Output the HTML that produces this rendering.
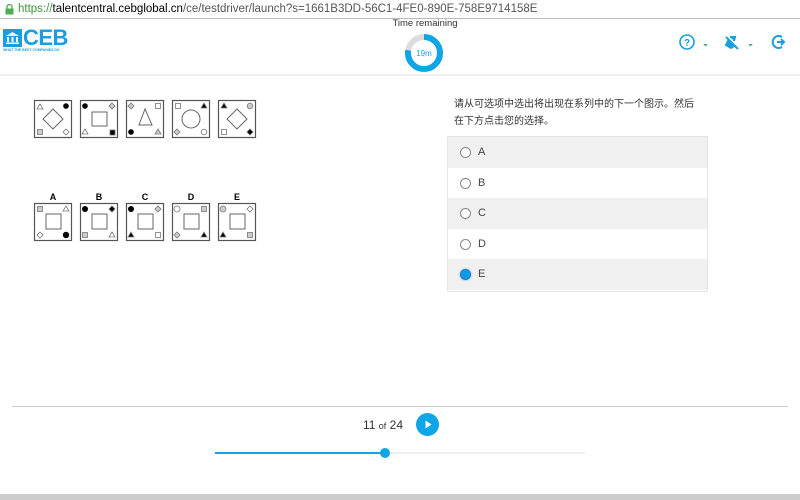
<!DOCTYPE html>
<html><head><meta charset="utf-8"><style>
*{margin:0;padding:0;box-sizing:border-box}
body{width:800px;height:500px;overflow:hidden;background:#fff;font-family:"Liberation Sans","Noto Sans CJK SC",sans-serif;position:relative;color:#333}
.abs{position:absolute}
.url{left:0;top:0;width:800px;height:19px;border-bottom:1px solid #bbb;background:#fff;font-size:11.5px;line-height:18px;padding-left:18px;color:#555}
.opt{position:absolute;left:448px;width:259px;height:30.5px;font-size:11px;line-height:30px;padding-left:30px;color:#444}
.rad{position:absolute;left:12px;top:10px;width:11px;height:11px;border:1px solid #888;border-radius:50%;background:#fff}
</style></head><body>
<div class="abs url"><svg class="abs" style="left:5px;top:4px" width="9" height="11"><rect x="0.5" y="4.5" width="8" height="6" fill="#4caf50"/><path d="M2 5V3a2.5 2.5 0 0 1 5 0v2" stroke="#4caf50" fill="none" stroke-width="1.3"/></svg><span style="color:#3a9a3a">https://</span><span style="color:#000">talentcentral.cebglobal.cn</span>/ce/testdriver/launch?s=1661B3DD-56C1-4FE0-890E-758E9714158E</div>
<div class="abs" style="left:0;top:74px;width:800px;height:2px;background:#eee"></div>
<div class="abs" style="left:3px;top:29px;width:19px;height:18px;background:#1a9ee0"></div>
<svg class="abs" style="left:5px;top:31px" width="15" height="14"><path d="M1 5L7.5 1L14 5Z" fill="#fff"/><rect x="2" y="6" width="2" height="5" fill="#fff"/><rect x="6.5" y="6" width="2" height="5" fill="#fff"/><rect x="11" y="6" width="2" height="5" fill="#fff"/><rect x="1" y="11.5" width="13" height="1.5" fill="#fff"/></svg>
<div class="abs" style="left:23px;top:25px;font-size:22px;font-weight:bold;color:#1a9ee0;letter-spacing:-0.5px">CEB</div>
<div class="abs" style="left:3px;top:48px;font-size:3.5px;color:#1a9ee0;font-weight:bold">WHAT THE BEST COMPANIES DO</div>
<div class="abs" style="left:385px;top:18px;width:80px;text-align:center;font-size:9.5px;color:#333">Time remaining</div>
<svg class="abs" style="left:403px;top:32px" width="42" height="42"><circle cx="21" cy="21" r="16" fill="none" stroke="#ddd" stroke-width="6"/><circle cx="21" cy="21" r="16" fill="none" stroke="#0ea5e9" stroke-width="6" stroke-dasharray="78 100.5" transform="rotate(-90 21 21)"/><text x="21" y="24" font-size="8" fill="#0ea5e9" text-anchor="middle" font-family="Liberation Sans">19m</text></svg>
<svg class="abs" style="left:676px;top:32px" width="120" height="22">
<circle cx="11" cy="10" r="7" fill="none" stroke="#1a9ee0" stroke-width="1.6"/><text x="11" y="14" font-size="10" fill="#1a9ee0" text-anchor="middle" font-family="Liberation Sans" font-weight="bold">?</text>
<path d="M27 12h5l-2.5 2.5z" fill="#5a9"/>
<path d="M50 5l12 12M52 9l6 5-3 2-5-3zM54 5h5l-1 4" stroke="#1a9ee0" stroke-width="2" fill="#1a9ee0"/>
<path d="M72 12h5l-2.5 2.5z" fill="#5a9"/>
<path d="M106 5a6 6 0 1 0 0 10" stroke="#1a9ee0" stroke-width="2" fill="none"/><path d="M101 10h7M105 7l3 3-3 3" stroke="#1a9ee0" stroke-width="2" fill="none"/>
</svg>
<svg class="abs" style="left:0;top:90px" width="300" height="160">
<g fill="none" stroke="#555" stroke-width="1.2">
<rect x="34.5" y="10.5" width="37" height="37"/><rect x="80.5" y="10.5" width="37" height="37"/><rect x="126.5" y="10.5" width="37" height="37"/><rect x="172.5" y="10.5" width="37" height="37"/><rect x="218.5" y="10.5" width="37" height="37"/>
<rect x="34.5" y="113.5" width="37" height="37"/><rect x="80.5" y="113.5" width="37" height="37"/><rect x="126.5" y="113.5" width="37" height="37"/><rect x="172.5" y="113.5" width="37" height="37"/><rect x="218.5" y="113.5" width="37" height="37"/>
</g>
<g fill="none" stroke="#666">
<path d="M53 19l10 10-10 10-10-10z"/><rect x="92" y="22" width="15" height="14"/><path d="M145 19l7 16h-13z"/><circle cx="191" cy="29" r="9"/><path d="M237 19l10 10-10 10-10-10z"/>
<rect x="46" y="124" width="15" height="15"/><rect x="92" y="124" width="15" height="15"/><rect x="138" y="124" width="15" height="15"/><rect x="184" y="124" width="15" height="15"/><rect x="230" y="124" width="15" height="15"/>
</g>
<g stroke="#777" stroke-width="0.8">
<path d="M40 14l3 5h-6z" fill="#fff"/><circle cx="66" cy="16" r="2.8" fill="#000" stroke="none"/><rect x="37.5" y="39.5" width="5" height="5" fill="#ccc"/><path d="M66 39l3 3-3 3-3-3z" fill="#fff"/>
<circle cx="85" cy="16" r="2.8" fill="#000" stroke="none"/><path d="M112 13l3 3-3 3-3-3z" fill="#ccc"/><path d="M85 39l3 5h-6z" fill="#fff"/><rect x="110" y="40" width="5" height="5" fill="#000"/>
<path d="M131 13l3 3-3 3-3-3z" fill="#ccc"/><rect x="155.5" y="13.5" width="5" height="5" fill="#fff"/><circle cx="131" cy="42" r="2.8" fill="#000" stroke="none"/><path d="M158 39l3 5h-6z" fill="#ccc"/>
<rect x="175.5" y="13.5" width="5" height="5" fill="#fff"/><path d="M204 13l3 5h-6z" fill="#000"/><path d="M177 39l3 3-3 3-3-3z" fill="#ccc"/><circle cx="204" cy="42" r="2.8" fill="#fff"/>
<path d="M224 13l3 5h-6z" fill="#000"/><circle cx="250" cy="16" r="2.8" fill="#ccc"/><rect x="221.5" y="39.5" width="5" height="5" fill="#fff"/><path d="M250 39l3 3-3 3-3-3z" fill="#000"/>
<rect x="37.5" y="116.5" width="5" height="5" fill="#ccc"/><path d="M66 116l3 5h-6z" fill="#fff"/><path d="M40 142l3 3-3 3-3-3z" fill="#fff"/><circle cx="66" cy="145" r="3.2" fill="#000" stroke="none"/>
<circle cx="85" cy="119" r="3" fill="#000" stroke="none"/><path d="M112 116l3 3-3 3-3-3z" fill="#000"/><rect x="82.5" y="142.5" width="5" height="5" fill="#ccc"/><path d="M112 142l3 5h-6z" fill="#fff"/>
<circle cx="131" cy="119" r="3" fill="#000" stroke="none"/><path d="M158 116l3 3-3 3-3-3z" fill="#ccc"/><path d="M131 142l3 5h-6z" fill="#000"/><rect x="155.5" y="142.5" width="5" height="5" fill="#fff"/>
<circle cx="177" cy="119" r="3" fill="#fff"/><rect x="201.5" y="116.5" width="5" height="5" fill="#ccc"/><path d="M177 142l3 3-3 3-3-3z" fill="#ccc"/><path d="M204 142l3 5h-6z" fill="#000"/>
<circle cx="223" cy="119" r="3" fill="#ccc"/><path d="M250 116l3 3-3 3-3-3z" fill="#fff"/><path d="M223 142l3 5h-6z" fill="#000"/><rect x="247.5" y="142.5" width="5" height="5" fill="#ccc"/>
</g>
<g font-family="Liberation Sans" font-weight="bold" font-size="9" fill="#000" text-anchor="middle">
<text x="53" y="110">A</text><text x="99" y="110">B</text><text x="145" y="110">C</text><text x="191" y="110">D</text><text x="237" y="110">E</text>
</g>
</svg>
<div class="abs" style="left:454px;top:96px;width:250px;font-size:10px;line-height:17px;color:#333">请从可选项中选出将出现在系列中的下一个图示。然后<br>在下方点击您的选择。</div>
<div class="abs" style="left:447px;top:136px;width:261px;height:156px;border:1px solid #e4e4e4;border-radius:2px"></div>
<div class="opt" style="top:137px;background:#f0f0f0"><span class="rad"></span>A</div>
<div class="opt" style="top:167.5px;background:#fff"><span class="rad"></span>B</div>
<div class="opt" style="top:198px;background:#f0f0f0"><span class="rad"></span>C</div>
<div class="opt" style="top:228.5px;background:#fff"><span class="rad"></span>D</div>
<div class="opt" style="top:259px;background:#f0f0f0"><span class="rad" style="background:#0a9ce8;border:1px solid #3377bb;box-shadow:0 0 2px #4af"></span>E</div>
<div class="abs" style="left:12px;top:406px;width:776px;height:1px;background:#ccc"></div>
<div class="abs" style="left:363px;top:418px;font-size:12px;color:#333">11 <span style="font-size:9px">of</span> 24</div>
<div class="abs" style="left:416px;top:413px;width:23px;height:23px;border-radius:50%;background:#0ea5e9"></div>
<svg class="abs" style="left:416px;top:413px" width="23" height="23"><path d="M9.5 7.5l6 4-6 4z" fill="#fff"/></svg>
<div class="abs" style="left:215px;top:452px;width:370px;height:2px;background:#eee"></div>
<div class="abs" style="left:215px;top:452px;width:170px;height:2px;background:#0ea5e9"></div>
<div class="abs" style="left:380px;top:448px;width:10px;height:10px;border-radius:50%;background:#0ea5e9"></div>
<div class="abs" style="left:0;top:494px;width:800px;height:6px;background:#ccc"></div>
</body></html>
